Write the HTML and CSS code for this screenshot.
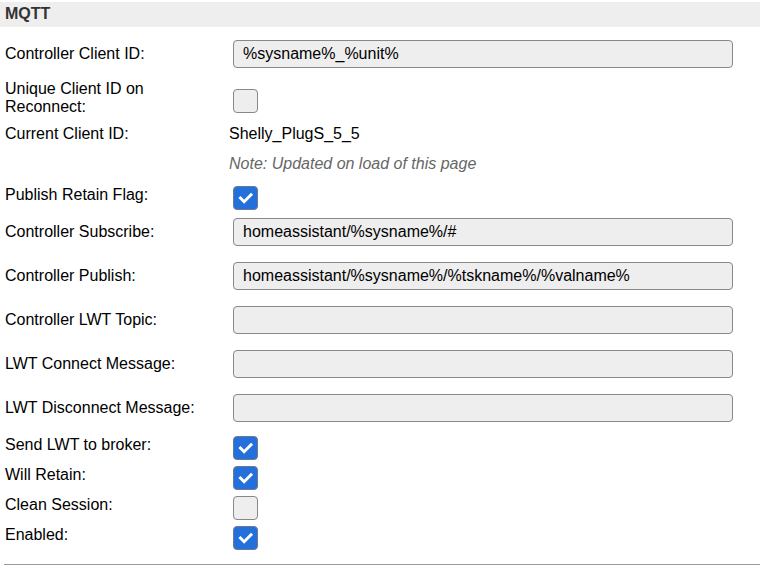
FILE: index.html
```html
<!DOCTYPE html>
<html>
<head>
<meta charset="utf-8">
<link rel="stylesheet" href="styles.css">
</head>
<body>
<div class="page">
  <div class="hdr">MQTT</div>

  <div class="row r-input">
    <div class="lbl">Controller Client ID:</div>
    <div class="val"><input class="txt" type="text" value="%sysname%_%unit%"></div>
  </div>

  <div class="row r-input">
    <div class="lbl">Unique Client ID on Reconnect:</div>
    <div class="val"><span class="cb"></span></div>
  </div>

  <div class="row r-text">
    <div class="lbl">Current Client ID:</div>
    <div class="val plain">Shelly_PlugS_5_5</div>
  </div>

  <div class="row r-note">
    <div class="lbl"></div>
    <div class="val note">Note: Updated on load of this page</div>
  </div>

  <div class="row r-cb">
    <div class="lbl">Publish Retain Flag:</div>
    <div class="val"><span class="cb on"><svg viewBox="0 0 24 24"><polyline points="6.5,12 10.5,16 18,8.5"/></svg></span></div>
  </div>

  <div class="row r-input">
    <div class="lbl">Controller Subscribe:</div>
    <div class="val"><input class="txt" type="text" value="homeassistant/%sysname%/#"></div>
  </div>

  <div class="row r-input">
    <div class="lbl">Controller Publish:</div>
    <div class="val"><input class="txt" type="text" value="homeassistant/%sysname%/%tskname%/%valname%"></div>
  </div>

  <div class="row r-input">
    <div class="lbl">Controller LWT Topic:</div>
    <div class="val"><input class="txt" type="text" value=""></div>
  </div>

  <div class="row r-input">
    <div class="lbl">LWT Connect Message:</div>
    <div class="val"><input class="txt" type="text" value=""></div>
  </div>

  <div class="row r-input">
    <div class="lbl">LWT Disconnect Message:</div>
    <div class="val"><input class="txt" type="text" value=""></div>
  </div>

  <div class="row r-cb">
    <div class="lbl">Send LWT to broker:</div>
    <div class="val"><span class="cb on"><svg viewBox="0 0 24 24"><polyline points="6.5,12 10.5,16 18,8.5"/></svg></span></div>
  </div>

  <div class="row r-cb">
    <div class="lbl">Will Retain:</div>
    <div class="val"><span class="cb on"><svg viewBox="0 0 24 24"><polyline points="6.5,12 10.5,16 18,8.5"/></svg></span></div>
  </div>

  <div class="row r-cb">
    <div class="lbl">Clean Session:</div>
    <div class="val"><span class="cb"></span></div>
  </div>

  <div class="row r-cb">
    <div class="lbl">Enabled:</div>
    <div class="val"><span class="cb on"><svg viewBox="0 0 24 24"><polyline points="6.5,12 10.5,16 18,8.5"/></svg></span></div>
  </div>

  <div class="rule"></div>
</div>
</body>
</html>
```

FILE: styles.css
```css
html, body {
  margin: 0;
  padding: 0;
  background: #fff;
}
body {
  font-family: "Liberation Sans", Arial, sans-serif;
  font-size: 16px;
  line-height: 18px;
  color: #000;
}
.page {
  width: 760px;
}
.hdr {
  margin-top: 2px;
  margin-bottom: 5px;
  height: 25px;
  box-sizing: border-box;
  padding: 0 0 2px 5px;
  line-height: 23px;
  background: #eee;
  font-weight: bold;
  color: #333;
}
.row {
  display: grid;
  grid-template-columns: 229px 1fr;
  align-items: center;
}
.r-input { height: 44px; }
.r-text { height: 28px; }
.r-note { height: 32px; }
.r-cb { height: 30px; }
.lbl {
  padding: 0 8px 0 5px;
}
.val {
  display: flex;
  align-items: center;
}
.plain, .note {
  display: block;
}
.note {
  font-style: italic;
  color: #666;
}
.txt {
  margin: 0 0 0 4px;
  width: 500px;
  height: 28px;
  box-sizing: border-box;
  border: 1px solid #888;
  border-radius: 4px;
  background: #eee;
  padding: 0 9px;
  font-family: "Liberation Sans", Arial, sans-serif;
  font-size: 16px;
  color: #000;
  outline: none;
}
.cb {
  display: block;
  box-sizing: border-box;
  margin: 6px 0 0 4px;
  width: 25px;
  height: 24px;
  border: 1px solid #888;
  border-radius: 4px;
  background: #eee;
}
.cb.on {
  background: #2370dc;
  border-color: #6b7a90;
}
.cb svg {
  display: block;
  width: 23px;
  height: 22px;
}
.cb polyline {
  fill: none;
  stroke: #fff;
  stroke-width: 3.2;
  stroke-linecap: square;
  stroke-linejoin: miter;
}
.rule {
  margin: 14px 0 0 4px;
  height: 1px;
  background: #999;
}
```
